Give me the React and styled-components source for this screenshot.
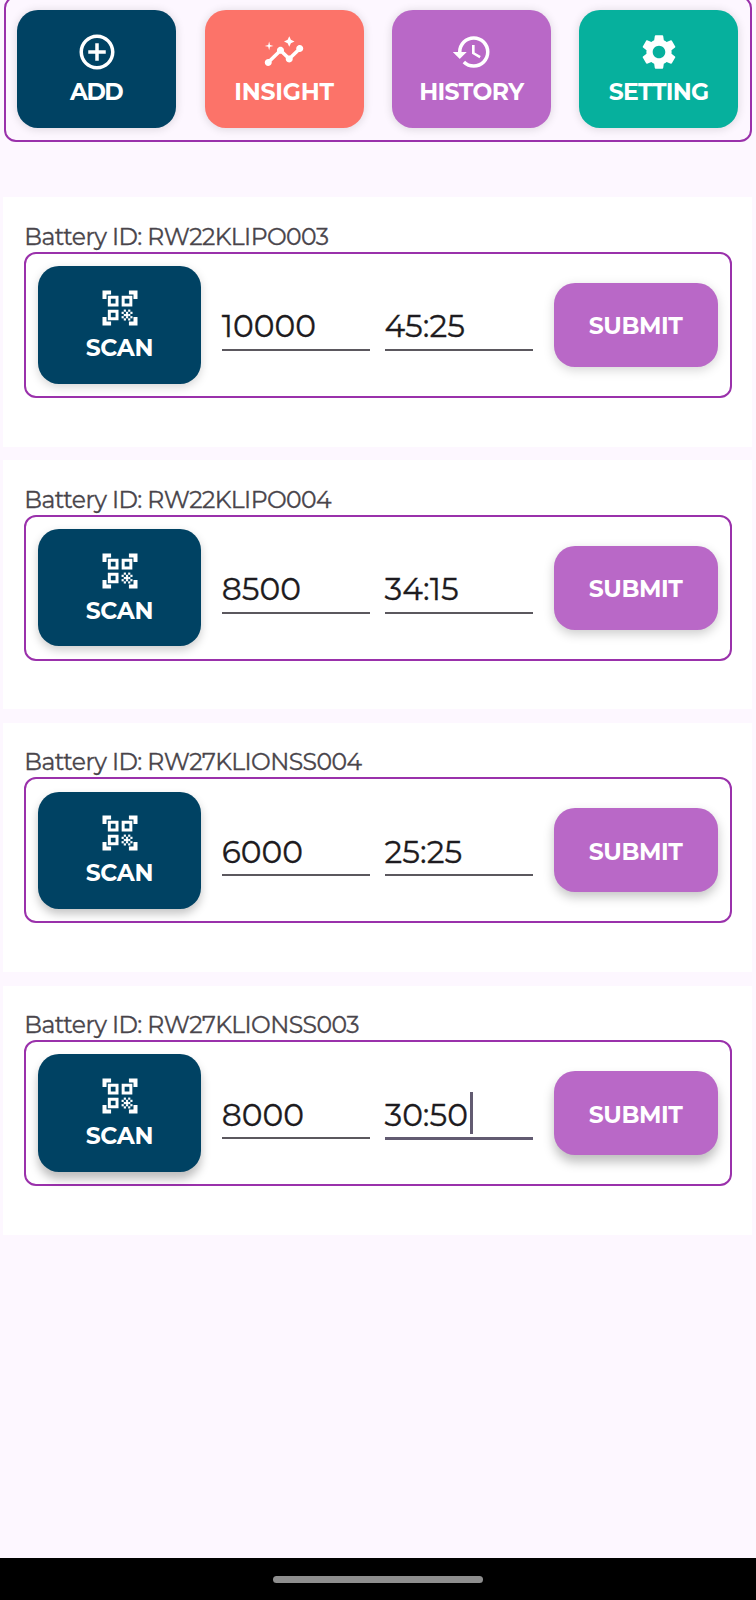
import React from "react";
import styled, { createGlobalStyle } from "styled-components";
import { MdControlPoint, MdHistory, MdInsights, MdSettings } from "react-icons/md";

const GlobalStyle = createGlobalStyle`
  *, *::before, *::after { box-sizing: border-box; }
  body { margin: 0; background: #fdf7ff; overflow: hidden; }
`;

const Screen = styled.div`
  width: 756px;
  height: 1600px;
  display: flex;
  flex-direction: column;
  overflow: hidden;
  background: #fdf7ff;
  font-family: Montserrat, Inter, sans-serif;
`;

const Toolbar = styled.nav`
  flex: none;
  height: 146px;
  margin: -4px 4px 0 4px;
  padding: 0 11.5px 0 11.3px;
  display: flex;
  align-items: center;
  justify-content: space-between;
  border: 2px solid #9a31ab;
  border-radius: 12px;
`;

const Tile = styled.button`
  flex: none;
  width: ${(p) => p.$width}px;
  height: 117.5px;
  padding: 0 0 1px;
  display: flex;
  flex-direction: column;
  align-items: center;
  justify-content: center;
  gap: 5px;
  border: 0;
  border-radius: 21px;
  background: ${(p) => p.$color};
  color: #fff;
  font: inherit;
  box-shadow: 0 ${(p) => p.$drop}px 10px rgba(0, 0, 0, ${(p) => p.$shade});

  svg {
    display: block;
    width: 42px;
    height: 42px;
  }
`;

const Caption = styled.span`
  font-size: 23.5px;
  font-weight: 700;
  line-height: 28px;
  letter-spacing: ${(p) => p.$track}px;
  margin-right: ${(p) => -p.$track}px;
  white-space: nowrap;
`;

const List = styled.main`
  flex: 1;
  padding: 55.2px 4px 0 3px;
  display: flex;
  flex-direction: column;
  gap: 13.3px;
`;

const Card = styled.section`
  flex: none;
  height: 249.5px;
  padding: 24.6px 20.5px 0 21.3px;
  background: #fff;
`;

const BatteryId = styled.h2`
  margin: 0;
  height: 30px;
  font-size: 23.5px;
  font-weight: 400;
  line-height: 30px;
  letter-spacing: -0.58px;
  color: #49454b;
  -webkit-text-stroke: 0.3px #49454b;
  white-space: nowrap;
`;

const Row = styled.div`
  height: 146px;
  padding: 0 12px;
  display: flex;
  align-items: center;
  border: 2px solid #9a31ab;
  border-radius: 12px;
`;

const Fields = styled.div`
  flex: 1;
  align-self: stretch;
  padding: 43px 21px 0;
  display: flex;
  justify-content: space-between;
  align-items: flex-start;
`;

const Field = styled.div`
  width: 148.5px;
  height: ${(p) => (p.$focused ? 55 : 54)}px;
  padding-top: 7px;
  display: flex;
  align-items: center;
  border-bottom: ${(p) => (p.$focused ? "3px solid #625b71" : "2px solid #5b585e")};
  color: #1d1b20;
  font-size: 31.3px;
  line-height: 42px;
  -webkit-text-stroke: 0.3px #1d1b20;
`;

const Caret = styled.i`
  width: 3px;
  height: 42px;
  margin: -3px 0 0 2px;
  background: #625b71;
`;

const Submit = styled.button`
  flex: none;
  width: 163.5px;
  height: 84px;
  padding: 3px 0 0;
  border: 0;
  border-radius: 21px;
  background: #b968c7;
  color: #fff;
  font: inherit;
  box-shadow: 0 ${(p) => p.$drop}px 11px rgba(0, 0, 0, ${(p) => p.$shade});
`;

const NavigationBar = styled.footer`
  flex: none;
  height: 42px;
  display: flex;
  justify-content: center;
  padding-top: 17.5px;
  background: #000;
`;

const HomeHandle = styled.div`
  width: 210px;
  height: 7.5px;
  border-radius: 4px;
  background: #8e8e8e;
`;

const actions = [
  { label: "ADD", color: "#004263", icon: MdControlPoint, track: -1.5 },
  { label: "INSIGHT", color: "#fc7369", icon: MdInsights, track: -0.2 },
  { label: "HISTORY", color: "#b968c7", icon: MdHistory, track: -0.6 },
  { label: "SETTING", color: "#06b09d", icon: MdSettings, track: -0.75 },
];

const batteries = [
  { id: "RW22KLIPO003", capacity: "10000", time: "45:25", drop: 3, shade: 0.17 },
  { id: "RW22KLIPO004", capacity: "8500", time: "34:15", drop: 4, shade: 0.2 },
  { id: "RW27KLIONSS004", capacity: "6000", time: "25:25", drop: 5, shade: 0.23 },
  { id: "RW27KLIONSS003", capacity: "8000", time: "30:50", drop: 7, shade: 0.26, focused: true },
];

const DOT = 1.25;
const dots = [];
for (let row = 0; row < 5; row += 1) {
  for (let col = 0; col < 5; col += 1) {
    if ((row + col) % 2 === 1 || (row === 2 && col === 2)) {
      dots.push([12.9 + col * DOT, 12.9 + row * DOT]);
    }
  }
}

function QrScanIcon() {
  return (
    <svg viewBox="0 0 24 24" fill="none" stroke="currentColor">
      <path
        d="M3.15 6.9V3.15H6.9M17.1 3.15h3.75V6.9M20.85 17.1v3.75H17.1M6.9 20.85H3.15V17.1"
        strokeWidth="2.3"
      />
      <path
        d="M5.9 5.9h4.4v4.4H5.9zM13.8 5.9h4.4v4.4h-4.4zM5.9 13.8h4.4v4.4H5.9z"
        strokeWidth="1.7"
      />
      <g fill="currentColor" stroke="none">
        {dots.map(([x, y]) => (
          <rect key={`${x}-${y}`} x={x} y={y} width={DOT} height={DOT} />
        ))}
      </g>
    </svg>
  );
}

export default function App() {
  return (
    <Screen>
      <GlobalStyle />
      <Toolbar>
        {actions.map(({ label, color, icon: Icon, track }) => (
          <Tile key={label} $width={159} $color={color} $drop={1} $shade={0.14}>
            <Icon />
            <Caption $track={track}>{label}</Caption>
          </Tile>
        ))}
      </Toolbar>
      <List>
        {batteries.map((b) => (
          <Card key={b.id}>
            <BatteryId>Battery ID: {b.id}</BatteryId>
            <Row>
              <Tile $width={162.5} $color="#004263" $drop={b.drop} $shade={b.shade}>
                <QrScanIcon />
                <Caption $track={-0.3}>SCAN</Caption>
              </Tile>
              <Fields>
                <Field>{b.capacity}</Field>
                <Field $focused={b.focused}>
                  {b.time}
                  {b.focused && <Caret />}
                </Field>
              </Fields>
              <Submit $drop={b.drop} $shade={b.shade}>
                <Caption $track={-0.4}>SUBMIT</Caption>
              </Submit>
            </Row>
          </Card>
        ))}
      </List>
      <NavigationBar>
        <HomeHandle />
      </NavigationBar>
    </Screen>
  );
}
